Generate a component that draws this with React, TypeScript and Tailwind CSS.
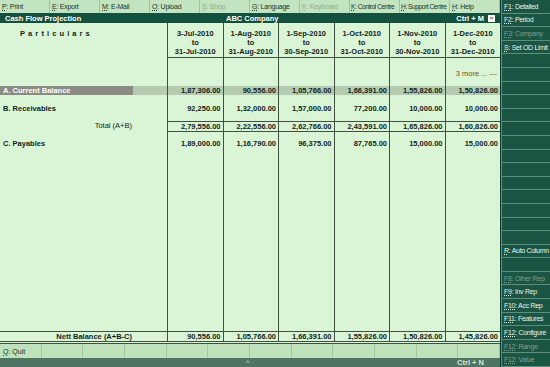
import { Fragment } from "react";

const cols = "grid grid-cols-[167px_repeat(6,1fr)]";
const line = "border-[#3f4f40]";

const topButtons: { key: string; label: string; off?: boolean; long?: boolean }[] = [
  { key: "P", label: "Print" },
  { key: "E", label: "Export" },
  { key: "M", label: "E-Mail" },
  { key: "O", label: "Upload" },
  { key: "S", label: "Shop", off: true },
  { key: "G", label: "Language" },
  { key: "K", label: "Keyboard", off: true },
  { key: "K", label: "Control Centre", long: true },
  { key: "H", label: "Support Centre", long: true },
  { key: "H", label: "Help" },
];

const sideButtons: ({ key: string; label: string; off?: boolean } | null)[] = [
  { key: "F1", label: "Detailed" },
  { key: "F2", label: "Period" },
  { key: "F3", label: "Company", off: true },
  { key: "S", label: "Set OD Limit" },
  null, null, null, null, null, null, null, null, null, null, null, null, null, null,
  { key: "R", label: "Auto Column" },
  null,
  { key: "F8", label: "Other Rep", off: true },
  { key: "F9", label: "Inv Rep" },
  { key: "F10", label: "Acc Rep" },
  { key: "F11", label: "Features" },
  { key: "F12", label: "Configure" },
  { key: "F12", label: "Range", off: true },
  { key: "F12", label: "Value", off: true },
];

const periods = [
  { from: "3-Jul-2010", to: "31-Jul-2010" },
  { from: "1-Aug-2010", to: "31-Aug-2010" },
  { from: "1-Sep-2010", to: "30-Sep-2010" },
  { from: "1-Oct-2010", to: "31-Oct-2010" },
  { from: "1-Nov-2010", to: "30-Nov-2010" },
  { from: "1-Dec-2010", to: "31-Dec-2010" },
];

const current = ["1,87,306.00", "90,556.00", "1,05,766.00", "1,66,391.00", "1,55,826.00", "1,50,826.00"];
const receivables = ["92,250.00", "1,32,000.00", "1,57,000.00", "77,200.00", "10,000.00", "10,000.00"];
const totals = ["2,79,556.00", "2,22,556.00", "2,62,766.00", "2,43,591.00", "1,65,826.00", "1,60,826.00"];
const payables = ["1,89,000.00", "1,16,790.00", "96,375.00", "87,765.00", "15,000.00", "15,000.00"];
const nett = ["90,556.00", "1,05,766.00", "1,66,391.00", "1,55,826.00", "1,50,826.00", "1,45,826.00"];

function AmountCells({ values, className = "" }: { values: string[]; className?: string }) {
  return (
    <>
      {values.map((v, i) => (
        <div key={i} className={`border-l ${line} pr-[2px] text-right font-bold ${className}`}>
          {v}
        </div>
      ))}
    </>
  );
}

function EmptyCells() {
  return (
    <>
      {periods.map((_, i) => (
        <div key={i} className={`border-l ${line}`} />
      ))}
    </>
  );
}

export default function App() {
  return (
    <div className="flex h-[367px] w-[550px] overflow-hidden bg-[#d9f5d5] font-['Liberation_Sans',Arial,sans-serif] text-[7.5px] leading-[9px] text-[#14241c]">
      <div className="flex w-[500px] flex-col">
        {/* top button bar */}
        <div className="flex h-[13px] bg-[#c2e4c0]">
          {topButtons.map((b, i) => (
            <div
              key={i}
              className={`flex w-[50px] items-center overflow-hidden whitespace-nowrap border-r border-[#9fc39e] ${
                b.long ? "pl-[1px] text-[6.6px] tracking-[-0.45px]" : "pl-[2px] text-[7px] tracking-[-0.25px]"
              } ${b.off ? "text-[#8eab8e]" : "text-[#1a3327]"}`}
            >
              <span className="underline decoration-dotted">{b.key}</span>: {b.label}
            </div>
          ))}
        </div>

        {/* title bar */}
        <div className="relative flex h-[10px] items-center bg-[#13503d] px-[5px] font-bold text-white">
          <span>Cash Flow Projection</span>
          <span className="absolute left-[226px]">ABC Company</span>
          <span className="ml-auto">Ctrl + M</span>
          <span className="ml-[4px] flex h-[7px] w-[7px] items-center justify-center bg-white text-[6px] leading-none text-[#555]">
            ×
          </span>
        </div>

        {/* report body */}
        <div className={`flex flex-1 flex-col border-b-[3px] border-double ${line}`}>
          <div className={`${cols} h-[35px]`}>
            <div className="pl-[20px] pt-[6px] font-bold tracking-[3.1px]">Particulars</div>
            {periods.map((p, i) => (
              <div key={i} className={`border-b border-l ${line} pt-[6px] text-center font-bold`}>
                {p.from}
                <br />
                to
                <br />
                {p.to}
              </div>
            ))}
          </div>

          <div className={`${cols} h-[28px]`}>
            <div />
            {periods.map((_, i) => (
              <div key={i} className={`border-l ${line} pr-[3px] pt-[11px] text-right text-[#7d4b22]`}>
                {i === 5 ? "3 more ... ---" : ""}
              </div>
            ))}
          </div>

          <div className={`${cols} h-[9px] bg-[#b5cbb0]`}>
            <div>
              <div className="w-[133px] bg-[#8b8a84] pl-[3px] font-bold text-white">A. Current Balance</div>
            </div>
            <AmountCells values={current} />
          </div>

          <div className={`${cols} h-[26px]`}>
            <div className="pl-[3px] pt-[9px] font-bold">B. Receivables</div>
            <AmountCells values={receivables} className="pt-[9px]" />
          </div>

          <div className={`${cols} h-[10px]`}>
            <div className="pr-[35px] text-right">Total (A+B)</div>
            {totals.map((v, i) => (
              <div key={i} className={`border-l border-y ${line} pr-[2px] text-right font-bold`}>
                {v}
              </div>
            ))}
          </div>

          <div className={`${cols} h-[22px]`}>
            <div className="pl-[3px] pt-[8px] font-bold">C. Payables</div>
            <AmountCells values={payables} className="pt-[8px]" />
          </div>

          <div className={`${cols} flex-1`}>
            <div />
            <EmptyCells />
          </div>

          <div className={`${cols} h-[10px] border-t ${line}`}>
            <div className="pr-[35px] text-right font-bold">Nett Balance (A+B-C)</div>
            <AmountCells values={nett} />
          </div>
        </div>

        {/* bottom button bar */}
        <div className="flex h-[14px] bg-[#bfe2bd]">
          {Array.from({ length: 12 }).map((_, i) => (
            <div key={i} className="flex flex-1 items-center border-r border-[#a3c6a2] pl-[3px] text-[7px] text-[#1a3327]">
              {i === 0 ? (
                <Fragment>
                  <span className="underline decoration-dotted">Q</span>: Quit
                </Fragment>
              ) : null}
            </div>
          ))}
        </div>

        {/* status bar */}
        <div className="relative flex h-[9px] items-center bg-[#4f7464] text-[#d5e6dc]">
          <span className="absolute left-[246px] top-[1px] text-[7px] leading-none">^</span>
          <span className="ml-auto pr-[16px] font-bold">Ctrl + N</span>
        </div>
      </div>

      {/* right function panel */}
      <div className="flex w-[50px] flex-col border-l border-[#0d3a2c] bg-[#1b5543]">
        {sideButtons.map((b, i) => (
          <div
            key={i}
            className={`flex flex-1 items-center overflow-hidden whitespace-nowrap border-b border-l border-[#5f8e7d] pl-[2px] text-[7px] tracking-[-0.3px] ${
              b?.off ? "text-[#7d9f90]" : "text-[#e6f2ec]"
            }`}
          >
            {b ? (
              <>
                <span className="underline decoration-dotted">{b.key}</span>: {b.label}
              </>
            ) : null}
          </div>
        ))}
      </div>
    </div>
  );
}
